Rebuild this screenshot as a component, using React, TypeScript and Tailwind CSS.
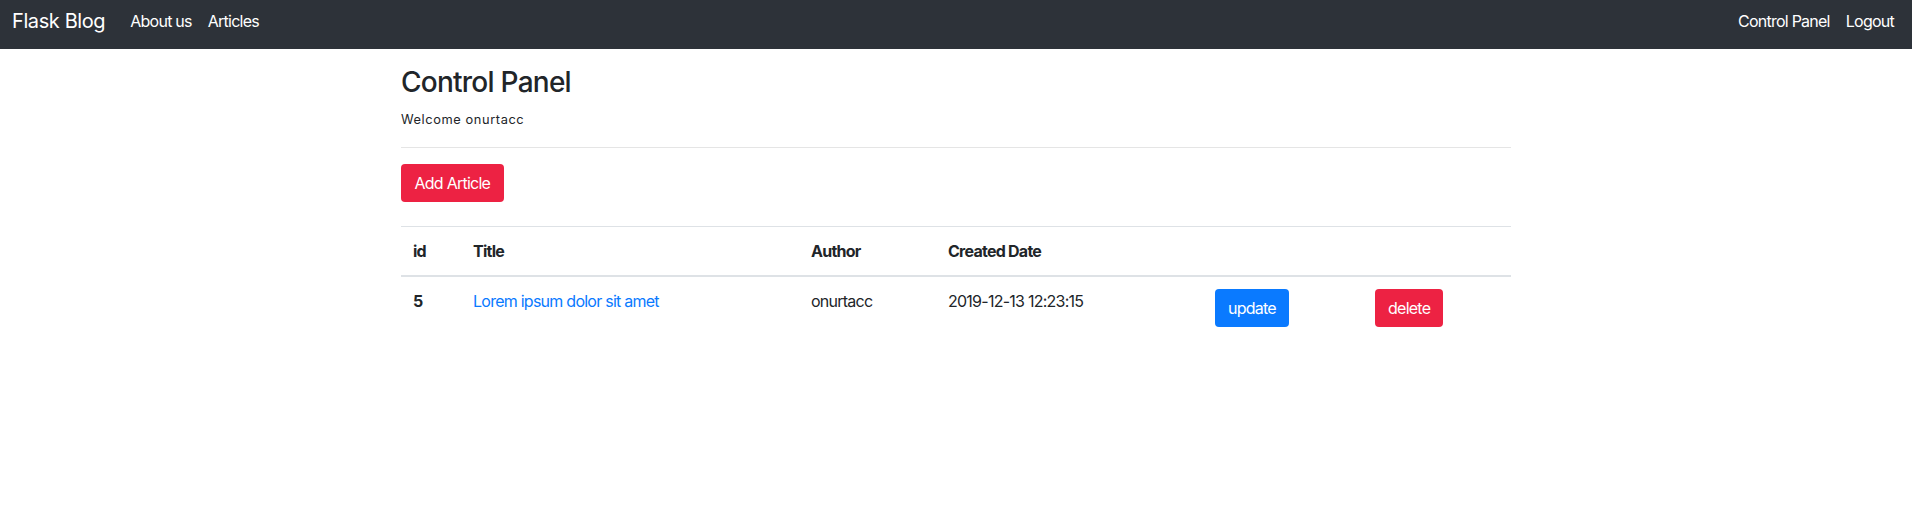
import React from 'react';

const articles = [
  { id: 5, title: 'Lorem ipsum dolor sit amet', author: 'onurtacc', created: '2019-12-13 12:23:15' },
];

export default function App() {
  return (
    <div className="min-h-[509px] bg-white text-[#212529] tracking-[-0.75px] font-['Inter','Liberation_Sans',sans-serif]">
      {/* Navbar */}
      <nav className="h-[49px] bg-[#2d3239] flex items-center justify-between pl-3 pr-[18px] pb-[7px]">
        <div className="flex items-center">
          <a className="text-[20px] leading-[30px] tracking-[-0.4px] text-white">Flask Blog</a>
          <div className="flex items-center gap-4 ml-[25px] text-[16px] leading-6 text-white">
            <a>About us</a>
            <a>Articles</a>
          </div>
        </div>
        <div className="flex items-center gap-4 text-[16px] leading-6 text-white">
          <a>Control Panel</a>
          <a>Logout</a>
        </div>
      </nav>

      {/* Content */}
      <div className="w-[1110px] mx-auto pt-[17px]">
        <h3 className="text-[28px] leading-[33.6px] font-medium mb-2">Control Panel</h3>
        <p className="text-[12.8px] leading-6 tracking-[0.6px] mb-[15px]">Welcome onurtacc</p>
        <hr className="border-t border-[#e5e5e5]" />
        <button className="mt-4 h-[38px] px-[13.5px] rounded bg-[#ed2243] text-white text-[16px] leading-6">Add Article</button>

        <table className="mt-6 w-full border-collapse text-[16px] leading-6 text-left">
          <thead>
            <tr className="border-t border-[#dee2e6] border-b-2">
              <th className="w-[60px] p-3 font-bold">id</th>
              <th className="w-[338px] p-3 font-bold">Title</th>
              <th className="w-[137px] p-3 font-bold">Author</th>
              <th className="w-[267px] p-3 font-bold">Created Date</th>
              <th className="w-[160px] p-3"></th>
              <th className="p-3"></th>
            </tr>
          </thead>
          <tbody>
            {articles.map(a => (
              <tr key={a.id}>
                <th className="p-3 align-top font-bold">{a.id}</th>
                <td className="p-3 align-top">
                  <a className="text-[#0a7aff]">{a.title}</a>
                </td>
                <td className="p-3 align-top">{a.author}</td>
                <td className="p-3 align-top">{a.created}</td>
                <td className="p-3 align-top">
                  <button className="h-[38px] px-[13px] rounded bg-[#0a7aff] text-white">update</button>
                </td>
                <td className="p-3 align-top">
                  <button className="h-[38px] px-[13px] rounded bg-[#ed2243] text-white">delete</button>
                </td>
              </tr>
            ))}
          </tbody>
        </table>
      </div>
    </div>
  );
}
